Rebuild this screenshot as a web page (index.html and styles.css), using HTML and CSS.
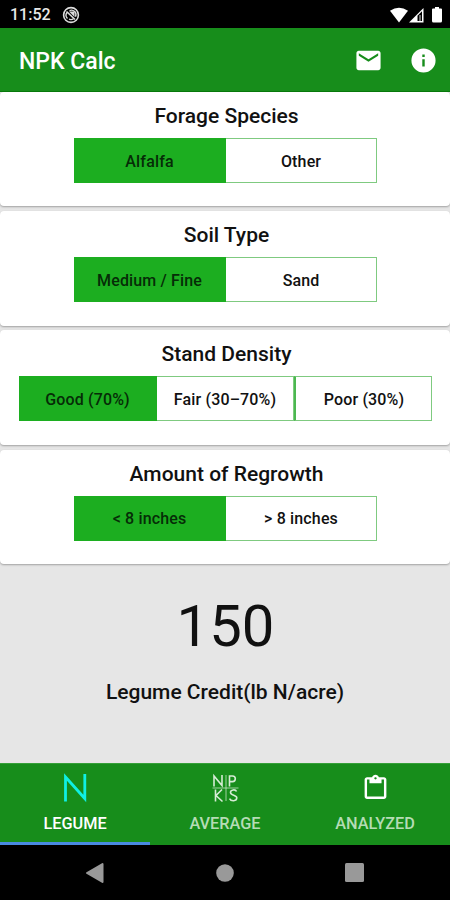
FILE: index.html
```html
<!DOCTYPE html>
<html lang="en">
<head>
<meta charset="utf-8">
<title>NPK Calc</title>
<link rel="stylesheet" href="styles.css">
</head>
<body>
<div class="phone">
  <div class="status">
    <span class="clock">11:52</span>
    <svg class="sync" width="18" height="18" viewBox="0 0 18 18"><circle cx="9" cy="9" r="7.400" fill="none" stroke="#ddd" stroke-width="1.600"/><path d="M5.500 12.500A4.600 4.600 0 015 6.500M7.500 4.600a4.600 4.600 0 016 6.200M7 13.200a4.600 4.600 0 004.500-.5" fill="none" stroke="#ddd" stroke-width="1.400"/><path d="M7 5.500h5.500V11z" fill="#ddd"/><path d="M4.500 5.500l8.500 8" stroke="#ddd" stroke-width="1.600"/></svg>
    <svg class="signals" width="54" height="18" viewBox="0 0 54 18"><path d="M1 4.8Q10 -1.5 19 4.8L10 16.5z" fill="#fff"/><path d="M34.500 2V16.500H20z" fill="#fff"/><path d="M28.500 9.800L33 5.300V15H28.500z" fill="#000"/><path d="M31 9v6" stroke="#bbb" stroke-width="1.200"/><path d="M44 2.500h2V1h4v1.500h2q1 0 1 1V15q0 1.500-1.500 1.500h-7q-1.500 0-1.500-1.500V3.500q0-1 1-1z" fill="#fff"/></svg>
  </div>
  <header class="appbar">
    <h1>NPK Calc</h1>
    <svg class="mail" width="29" height="29" viewBox="0 0 24 24"><path fill="#fff" d="M20 4H4c-1.100 0-2 .9-2 2v12c0 1.100.9 2 2 2h16c1.100 0 2-.9 2-2V6c0-1.100-.9-2-2-2zm0 4l-8 5-8-5V6l8 5 8-5v2z"/></svg>
    <svg class="info" width="29" height="29" viewBox="0 0 24 24"><path fill="#fff" d="M12 2a10 10 0 100 20 10 10 0 000-20zm1 15h-2v-6h2v6zm0-8h-2V7h2v2z"/></svg>
  </header>
  <main>
    <section class="card"><h2>Forage Species</h2>
      <div class="group"><button class="on">Alfalfa</button><button>Other</button></div></section>
    <section class="card"><h2>Soil Type</h2>
      <div class="group"><button class="on">Medium / Fine</button><button>Sand</button></div></section>
    <section class="card"><h2>Stand Density</h2>
      <div class="group wide"><button class="on">Good (70%)</button><button>Fair (30–70%)</button><button>Poor (30%)</button></div></section>
    <section class="card"><h2>Amount of Regrowth</h2>
      <div class="group"><button class="on">&lt; 8 inches</button><button>&gt; 8 inches</button></div></section>
    <div class="result">
      <div class="value">150</div>
      <div class="label">Legume Credit(lb N/acre)</div>
    </div>
  </main>
  <nav class="tabs">
    <div class="tab active">
      <svg width="30" height="30" viewBox="0 0 30 30"><path d="M5.500 28.500V4L24.800 25.500V1" fill="none" stroke="#0ff0e4" stroke-width="2.800" stroke-linejoin="miter"/></svg>
      <span>LEGUME</span>
    </div>
    <div class="tab">
      <svg width="30" height="30" viewBox="0 0 30 30" fill="none" stroke="#d6ecd5" stroke-width="1.600"><path d="M4 13.500V3l8 9.500V2M19.500 13.500V3h3a2.700 2.700 0 010 5.600h-3M5.500 16.500v12M12 16.500l-6 6 6.500 6M26.500 18.500c-1-2.500-6-2-6 1 0 3.200 6.300 2.200 6.300 5.300 0 3.700-5.800 3.700-7.300.8"/><path d="M2.500 15h26M16 2v26" stroke-width=".9" opacity=".8"/></svg>
      <span>AVERAGE</span>
    </div>
    <div class="tab">
      <svg width="29" height="29" viewBox="0 0 24 24"><path fill="#fff" d="M19 3h-4.180C14.400 1.840 13.300 1 12 1s-2.400.84-2.820 2H5c-1.100 0-2 .9-2 2v14c0 1.100.9 2 2 2h14c1.100 0 2-.9 2-2V5c0-1.100-.9-2-2-2zm-7 0c.55 0 1 .45 1 1s-.45 1-1 1-1-.45-1-1 .45-1 1-1zm7 16H5V5h2v3h10V5h2v14z"/></svg>
      <span>ANALYZED</span>
    </div>
  </nav>
  <div class="navbar">
    <svg width="20" height="22" viewBox="0 0 20 22"><path d="M2 11L17.500 2V20z" fill="#999" stroke="#999" stroke-width="2" stroke-linejoin="round"/></svg>
    <svg width="18" height="18" viewBox="0 0 18 18"><circle cx="9" cy="9" r="8.800" fill="#999"/></svg>
    <svg width="19" height="19" viewBox="0 0 19 19"><rect width="19" height="19" rx="1.500" fill="#999"/></svg>
  </div>
</div>
</body>
</html>
```
FILE: styles.css
```css
* { box-sizing: border-box; }
body { margin: 0; font-family: Roboto, sans-serif; color: #111; }
.phone { width: 450px; height: 900px; display: flex; flex-direction: column; background: #e6e6e6; overflow: hidden; }
.status { height: 28px; background: #000; display: flex; align-items: center; padding: 1px 7px 0 10px; color: #e8e8e8; }
.clock { font-size: 16px; font-weight: 500; line-height: 28px; }
.sync { margin-left: 11px; }
.signals { margin-left: auto; }
.appbar { height: 64px; background: #178d1b; border-bottom: 1px solid #087a0c; display: flex; align-items: center; padding: 2px 12px 0 19px; color: #fff; }
.appbar h1 { margin: 0; font-size: 23px; font-weight: 500; flex: 1; padding-top: 2px; }
.mail { margin-right: 26px; }
main { flex: 1; display: flex; flex-direction: column; }
.card { height: 114.400px; margin-bottom: 4.800px; background: #fff; border-radius: 4px; box-shadow: 0 1px 2px rgba(0,0,0,.3); display: flex; flex-direction: column; align-items: center; padding-top: 12px; }
.card h2 { margin: 0 0 10px; font-size: 21px; line-height: 24px; font-weight: 500; padding-left: 3px; }
.group { display: flex; width: 303px; height: 45px; }
.group.wide { width: 414px; margin-left: 1px; }
.group button { flex: 1 1 0; font: 500 16px Roboto, sans-serif; letter-spacing: .15px; color: #111; background: #fff; border: 1px solid #7fca80; border-left-width: 0; padding: 1px 0 0 1px; }
.group button.on { background: #1cae20; border-color: #1cae20; color: #062c07; flex-grow: 1.008; }
.group button:nth-child(3) { border-left: 2px solid #4cb850; }
.result { display: flex; flex-direction: column; align-items: center; padding-top: 23px; }
.value { font-size: 58px; line-height: 68px; padding-left: 1px; }
.label { font-size: 21px; line-height: 24px; font-weight: 500; margin-top: 20px; }
.tabs { height: 82px; background: #178d1b; display: flex; border-top: 1px solid #35a038; }
.tab { flex: 1; display: flex; flex-direction: column; align-items: center; padding-top: 9px; border-bottom: 3px solid transparent; color: #b5dcb5; }
.tab svg { height: 30px; }
.tab span { font-size: 16.300px; line-height: 20px; font-weight: 500; margin-top: 11px; }
.tab.active { border-color: #4a8be0; color: #fff; }
.navbar { height: 55px; background: #000; display: flex; align-items: center; justify-content: space-between; padding: 0 86px 0 85px; }
```
